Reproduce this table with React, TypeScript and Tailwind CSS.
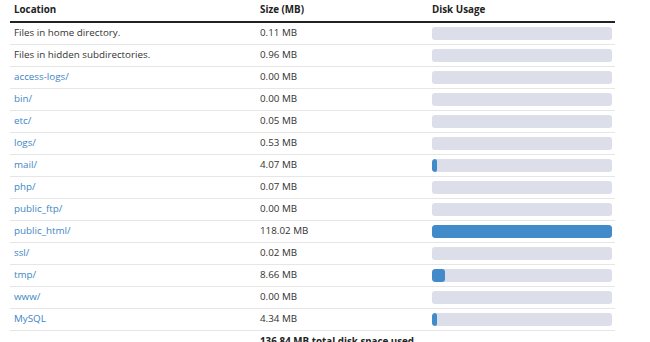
const rows = [
  { location: 'Files in home directory.', size: 0.11, link: false },
  { location: 'Files in hidden subdirectories.', size: 0.96, link: false },
  { location: 'access-logs/', size: 0.0, link: true },
  { location: 'bin/', size: 0.0, link: true },
  { location: 'etc/', size: 0.05, link: true },
  { location: 'logs/', size: 0.53, link: true },
  { location: 'mail/', size: 4.07, link: true },
  { location: 'php/', size: 0.07, link: true },
  { location: 'public_ftp/', size: 0.0, link: true },
  { location: 'public_html/', size: 118.02, link: true },
  { location: 'ssl/', size: 0.02, link: true },
  { location: 'tmp/', size: 8.66, link: true },
  { location: 'www/', size: 0.0, link: true },
  { location: 'MySQL', size: 4.34, link: true },
];

const maxSize = Math.max(...rows.map((r) => r.size));

function UsageBar({ size }: { size: number }) {
  // whole percent of the largest directory
  const pct = Math.floor((size / maxSize) * 100);
  return (
    <div className="h-[13px] w-[180px] overflow-hidden rounded-[3px] bg-[#dcdeea]">
      {pct > 0 && <div className="h-full rounded-[3px] bg-[#428bca]" style={{ width: `${pct}%` }} />}
    </div>
  );
}

export default function App() {
  return (
    <div className="h-[342px] w-[650px] overflow-hidden bg-white font-['Open_Sans',sans-serif] text-[9.8px] text-[#333]">
      <div className="ml-[10px] w-[605px]">
        <div className="grid h-[23px] grid-cols-[246px_172px_187px] items-center border-b-2 border-[#222] font-bold text-[#222]">
          <div className="px-1">Location</div>
          <div className="px-1">Size (MB)</div>
          <div className="px-1">Disk Usage</div>
        </div>
        {rows.map((row) => (
          <div
            key={row.location}
            className="grid h-[22px] grid-cols-[246px_172px_187px] items-center border-b border-[#e6e6e6]"
          >
            <div className={row.link ? 'px-1 text-[#3d86c6]' : 'px-1'}>{row.location}</div>
            <div className="px-1">{row.size.toFixed(2)} MB</div>
            <div className="px-1">
              <UsageBar size={row.size} />
            </div>
          </div>
        ))}
        <div className="grid h-[22px] grid-cols-[246px_172px_187px] items-center font-bold text-[#222]">
          <div />
          <div className="col-span-2 whitespace-nowrap px-1">136.84 MB total disk space used</div>
        </div>
      </div>
    </div>
  );
}
